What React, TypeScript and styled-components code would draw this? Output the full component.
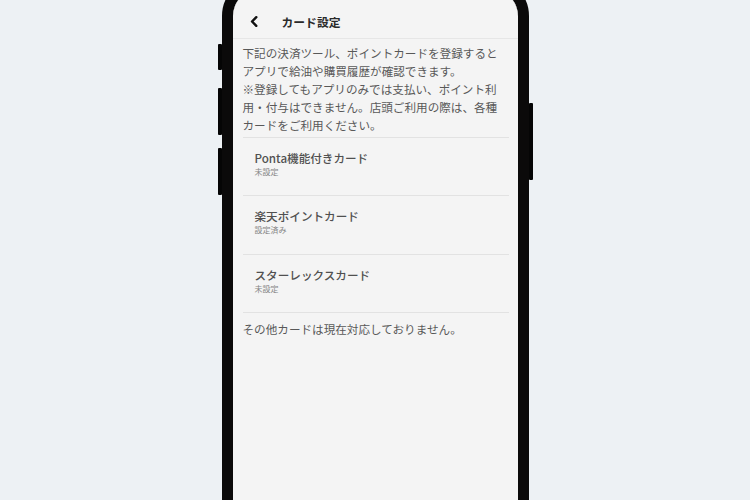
import React from 'react';
import styled, { createGlobalStyle } from 'styled-components';

const GlobalStyle = createGlobalStyle`
  html, body {
    margin: 0;
    padding: 0;
    height: 100%;
    overflow: hidden;
    background: #edf1f4;
  }
  body {
    font-family: "Noto Sans CJK JP", "Noto Sans", sans-serif;
  }
`;

const Stage = styled.div`
  width: 750px;
  height: 500px;
  display: flex;
  justify-content: center;
  overflow: hidden;
`;

const Phone = styled.div`
  position: relative;
  margin-top: -22px;
  width: 307px;
  height: 560px;
  box-sizing: border-box;
  border: 11px solid #0b0a0a;
  border-radius: 38px;
  background: #f5f5f5;
  box-shadow: inset 0 0 0 1px #1c1b1b;
  flex-shrink: 0;
`;

const SideButton = styled.span<{ $side: 'left' | 'right'; $top: number; $height: number }>`
  position: absolute;
  ${(p) => (p.$side === 'left' ? 'left: -15px;' : 'right: -15px;')}
  top: ${(p) => p.$top}px;
  width: 4px;
  height: ${(p) => p.$height}px;
  background: #050505;
  border-radius: 1px;
`;

const Screen = styled.div`
  height: 100%;
  border-radius: 27px;
  overflow: hidden;
  background: #f4f4f4;
  display: flex;
  flex-direction: column;
`;

const Header = styled.header`
  height: 50px;
  box-sizing: border-box;
  padding: 16px 0 0 15px;
  display: flex;
  align-items: center;
  gap: 22px;
  border-bottom: 1px solid #e6e6e6;
`;

const BackButton = styled.button`
  width: 12px;
  height: 14px;
  padding: 0;
  border: none;
  background: none;
  display: flex;
  align-items: center;
  justify-content: center;
  color: #111;
`;

const Title = styled.h1`
  margin: 0;
  font-size: 11.8px;
  font-weight: 700;
  color: #2a2a2a;
  line-height: 16px;
`;

const Content = styled.div`
  padding: 0 9px 0 10px;
`;

const Notice = styled.p`
  margin: 0;
  padding: 5px 0 3px;
  font-size: 11.6px;
  line-height: 18px;
  color: #585858;
  border-bottom: 1px solid #e2e2e2;
`;

const CardList = styled.ul`
  list-style: none;
  margin: 0;
  padding: 0;
`;

const CardItem = styled.li`
  height: 58.3px;
  box-sizing: border-box;
  padding: 12px 0 0 12px;
  border-bottom: 1px solid #e2e2e2;
`;

const CardName = styled.div`
  font-size: 11.6px;
  font-weight: 500;
  line-height: 16px;
  color: #505050;
`;

const CardStatus = styled.div`
  font-size: 8px;
  line-height: 12px;
  color: #858585;
`;

const Footnote = styled.p`
  margin: 0;
  padding-top: 7px;
  font-size: 11.6px;
  line-height: 18px;
  color: #585858;
`;

const cards = [
  { name: 'Ponta機能付きカード', status: '未設定' },
  { name: '楽天ポイントカード', status: '設定済み' },
  { name: 'スターレックスカード', status: '未設定' },
];

export default function App() {
  return (
    <>
      <GlobalStyle />
      <Stage>
        <Phone>
          <SideButton $side="left" $top={55} $height={26} />
          <SideButton $side="left" $top={99} $height={47} />
          <SideButton $side="left" $top={159} $height={47} />
          <SideButton $side="right" $top={114} $height={77} />
          <Screen>
            <Header>
              <BackButton aria-label="戻る">
                <svg width="8" height="11" viewBox="0 0 8 11">
                  <path d="M6.3 1.2 L2 5.5 L6.3 9.8" fill="none" stroke="currentColor" strokeWidth="2.4" strokeLinecap="round" strokeLinejoin="round" />
                </svg>
              </BackButton>
              <Title>カード設定</Title>
            </Header>
            <Content>
              <Notice>
                下記の決済ツール、ポイントカードを登録すると<br />
                アプリで給油や購買履歴が確認できます。<br />
                ※登録してもアプリのみでは支払い、ポイント利<br />
                用・付与はできません。店頭ご利用の際は、各種<br />
                カードをご利用ください。
              </Notice>
              <CardList>
                {cards.map((card) => (
                  <CardItem key={card.name}>
                    <CardName>{card.name}</CardName>
                    <CardStatus>{card.status}</CardStatus>
                  </CardItem>
                ))}
              </CardList>
              <Footnote>その他カードは現在対応しておりません。</Footnote>
            </Content>
          </Screen>
        </Phone>
      </Stage>
    </>
  );
}
